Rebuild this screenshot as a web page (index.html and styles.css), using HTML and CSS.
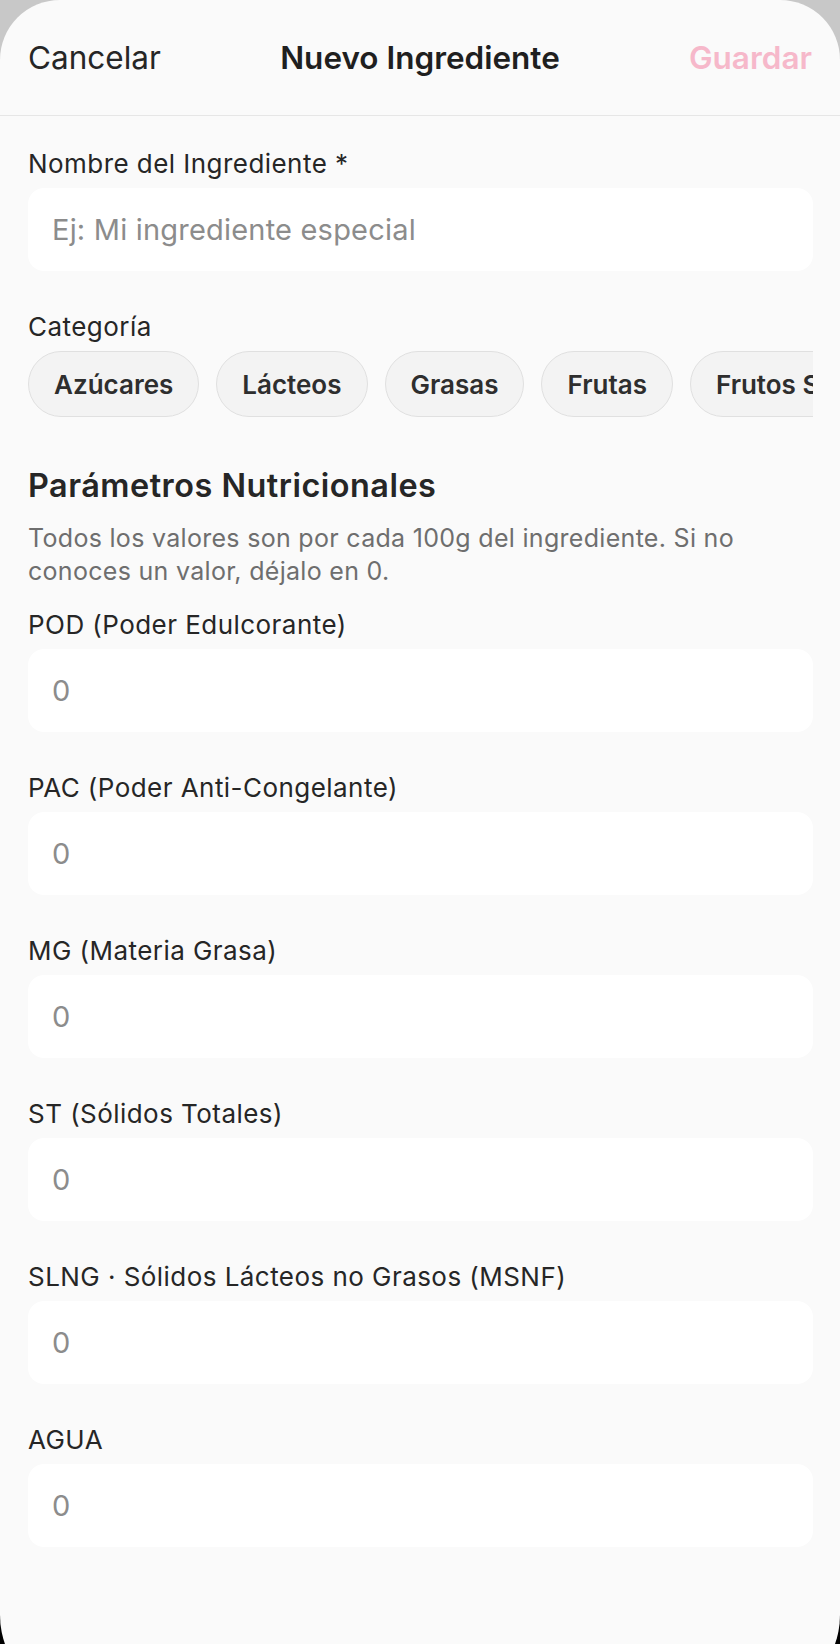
FILE: index.html
```html
<!DOCTYPE html>
<html lang="es">
<head>
  <meta charset="utf-8">
  <title>Nuevo Ingrediente</title>
  <link rel="stylesheet" href="styles.css">
</head>
<body>
  <div class="sheet">
    <header class="nav">
      <button class="nav-btn nav-cancel">Cancelar</button>
      <h1 class="nav-title">Nuevo Ingrediente</h1>
      <button class="nav-btn nav-save">Guardar</button>
    </header>

    <main class="form">
      <div class="field">
        <label for="name">Nombre del Ingrediente *</label>
        <input type="text" id="name" placeholder="Ej: Mi ingrediente especial">
      </div>

      <div class="field field-chips">
        <label>Categoría</label>
        <div class="chips">
          <button class="chip">Azúcares</button>
          <button class="chip">Lácteos</button>
          <button class="chip">Grasas</button>
          <button class="chip">Frutas</button>
          <button class="chip">Frutos Secos</button>
          <button class="chip">Otros</button>
        </div>
      </div>

      <section class="params">
        <h2>Parámetros Nutricionales</h2>
        <p class="params-note">Todos los valores son por cada 100g del ingrediente. Si no conoces un valor, déjalo en 0.</p>

        <div class="field">
          <label for="pod">POD (Poder Edulcorante)</label>
          <input type="text" id="pod" placeholder="0">
        </div>
        <div class="field">
          <label for="pac">PAC (Poder Anti-Congelante)</label>
          <input type="text" id="pac" placeholder="0">
        </div>
        <div class="field">
          <label for="mg">MG (Materia Grasa)</label>
          <input type="text" id="mg" placeholder="0">
        </div>
        <div class="field">
          <label for="st">ST (Sólidos Totales)</label>
          <input type="text" id="st" placeholder="0">
        </div>
        <div class="field">
          <label for="slng">SLNG · Sólidos Lácteos no Grasos (MSNF)</label>
          <input type="text" id="slng" placeholder="0">
        </div>
        <div class="field">
          <label for="agua">AGUA</label>
          <input type="text" id="agua" placeholder="0">
        </div>
      </section>
    </main>
  </div>
</body>
</html>
```

FILE: styles.css
```css
/* hoja modal de nuevo ingrediente */
html,
body {
  margin: 0;
  height: 1644px;
  overflow: hidden;
}

body {
  background: linear-gradient(#c8c8c8 50%, #000000 50%);
  font-family: Inter, "Noto Sans", sans-serif;
  color: #262626;
}

.sheet {
  height: 1702px;
  background-color: #fafafa;
  border-radius: 60px 60px 87px 87px;
}

.nav {
  display: grid;
  grid-template-columns: 1fr auto 1fr;
  align-items: center;
  height: 115px;
  padding: 0 28px 0 28px;
  border-bottom: 1px solid #e6e6e6;
}

.nav-btn {
  padding: 0;
  border: none;
  background: none;
  font-family: inherit;
  font-size: 31.5px;
  cursor: pointer;
}

.nav-cancel {
  justify-self: start;
  color: #262626;
}

.nav-save {
  justify-self: end;
  color: #f6b8ca;
  font-weight: 600;
}

.nav-title {
  margin: 0;
  font-size: 31.5px;
  font-weight: 600;
  color: #1f1f1f;
}

.form {
  padding: 33px 27px 0 28px;
}

.field {
  margin-bottom: 41px;
}

.field label {
  display: block;
  font-size: 26px;
  letter-spacing: 0.45px;
  line-height: 29px;
  margin-bottom: 10px;
  color: #262626;
}

.field input {
  display: block;
  box-sizing: border-box;
  width: 100%;
  height: 83px;
  padding: 0 24px;
  border: none;
  border-radius: 16px;
  background-color: #ffffff;
  font-family: inherit;
  font-size: 29px;
  letter-spacing: 0.2px;
  color: #262626;
  outline: none;
}

.field input::placeholder {
  color: #8c8c8c;
}

.field-chips {
  margin-bottom: 50px;
}

.chips {
  display: flex;
  gap: 17px;
  overflow: hidden;
}

.chip {
  flex-shrink: 0;
  box-sizing: border-box;
  height: 66px;
  padding: 0 25px;
  border: 1.5px solid #e0e0e0;
  border-radius: 33px;
  background-color: #f3f3f3;
  font-family: inherit;
  font-size: 26px;
  font-weight: 600;
  color: #2e2e2e;
  cursor: pointer;
}

.params h2 {
  margin: 0;
  font-size: 32.4px;
  letter-spacing: 0.5px;
  line-height: 37px;
  font-weight: 600;
  color: #262626;
}

.params-note {
  margin: 18px 0 22px 0;
  font-size: 25px;
  letter-spacing: 0.3px;
  line-height: 33px;
  color: #6e6e6e;
}
```
